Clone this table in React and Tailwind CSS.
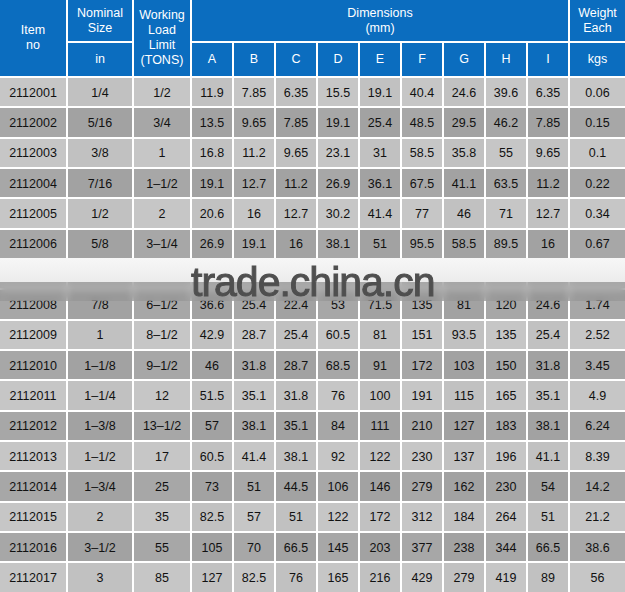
import React from 'react';

const rows = [
  ['2112001', '1/4', '1/2', '11.9', '7.85', '6.35', '15.5', '19.1', '40.4', '24.6', '39.6', '6.35', '0.06'],
  ['2112002', '5/16', '3/4', '13.5', '9.65', '7.85', '19.1', '25.4', '48.5', '29.5', '46.2', '7.85', '0.15'],
  ['2112003', '3/8', '1', '16.8', '11.2', '9.65', '23.1', '31', '58.5', '35.8', '55', '9.65', '0.1'],
  ['2112004', '7/16', '1–1/2', '19.1', '12.7', '11.2', '26.9', '36.1', '67.5', '41.1', '63.5', '11.2', '0.22'],
  ['2112005', '1/2', '2', '20.6', '16', '12.7', '30.2', '41.4', '77', '46', '71', '12.7', '0.34'],
  ['2112006', '5/8', '3–1/4', '26.9', '19.1', '16', '38.1', '51', '95.5', '58.5', '89.5', '16', '0.67'],
  ['2112007', '3/4', '4–3/4', '31.8', '22.4', '19.1', '46', '60.5', '112', '68.5', '104', '19.1', '1.02'],
  ['2112008', '7/8', '6–1/2', '36.6', '25.4', '22.4', '53', '71.5', '135', '81', '120', '24.6', '1.74'],
  ['2112009', '1', '8–1/2', '42.9', '28.7', '25.4', '60.5', '81', '151', '93.5', '135', '25.4', '2.52'],
  ['2112010', '1–1/8', '9–1/2', '46', '31.8', '28.7', '68.5', '91', '172', '103', '150', '31.8', '3.45'],
  ['2112011', '1–1/4', '12', '51.5', '35.1', '31.8', '76', '100', '191', '115', '165', '35.1', '4.9'],
  ['2112012', '1–3/8', '13–1/2', '57', '38.1', '35.1', '84', '111', '210', '127', '183', '38.1', '6.24'],
  ['2112013', '1–1/2', '17', '60.5', '41.4', '38.1', '92', '122', '230', '137', '196', '41.1', '8.39'],
  ['2112014', '1–3/4', '25', '73', '51', '44.5', '106', '146', '279', '162', '230', '54', '14.2'],
  ['2112015', '2', '35', '82.5', '57', '51', '122', '172', '312', '184', '264', '51', '21.2'],
  ['2112016', '3–1/2', '55', '105', '70', '66.5', '145', '203', '377', '238', '344', '66.5', '38.6'],
  ['2112017', '3', '85', '127', '82.5', '76', '165', '216', '429', '279', '419', '89', '56'],
];

const dims = ['A', 'B', 'C', 'D', 'E', 'F', 'G', 'H', 'I'];

// cell shade: rows alternate light / dark, columns alternate slightly
const shade = (r, c) => {
  const dark = r % 2 === 1;
  const alt = c % 2 === 1;
  if (dark) return alt ? 'bg-[#a2a2a2]' : 'bg-[#a7a7a7]';
  return alt ? 'bg-[#c1c1c1]' : 'bg-[#c6c6c6]';
};

const Head = ({ className = '', children }) => (
  <div className={`flex items-center justify-center bg-[#0b6dbf] text-center text-[12.5px] leading-[15px] text-white ${className}`}>
    {children}
  </div>
);

export default function App() {
  return (
    <div className="relative h-[592px] w-[625px] overflow-hidden bg-white font-['Liberation_Sans',Arial,sans-serif]">
      <div className="grid grid-cols-[66px_64px_56px_repeat(9,40px)_1fr] grid-rows-[41px_33px_repeat(17,28.33px)] gap-[2px]">
        <Head className="row-span-2">Item<br />no</Head>
        <Head>Nominal<br />Size</Head>
        <Head className="row-span-2">Working<br />Load<br />Limit<br />(TONS)</Head>
        <Head className="col-span-9">Dimensions<br />(mm)</Head>
        <Head>Weight<br />Each</Head>
        <Head>in</Head>
        {dims.map((d) => (
          <Head key={d}>{d}</Head>
        ))}
        <Head>kgs</Head>

        {rows.map((row, r) =>
          row.map((v, c) => (
            <div
              key={`${r}-${c}`}
              className={`flex items-center justify-center pt-[2px] text-[12.5px] text-[#111] ${shade(r, c)}`}
            >
              {v}
            </div>
          ))
        )}
      </div>

      {/* watermark */}
      <div className="absolute left-0 right-0 top-[258px] h-[24px] bg-gradient-to-b from-[#f7f7f7] to-[#ececec]" />
      <div className="absolute left-0 right-0 top-[282px] h-[19px] bg-[#939393]/60 backdrop-blur-[3px]" />
      <div className="absolute left-[191px] top-[262px] text-[41px] leading-none tracking-[-1px] text-[#4f4f4f] blur-[0.5px] [-webkit-text-stroke:1px_#4f4f4f]">
        trade.china.cn
      </div>
    </div>
  );
}
